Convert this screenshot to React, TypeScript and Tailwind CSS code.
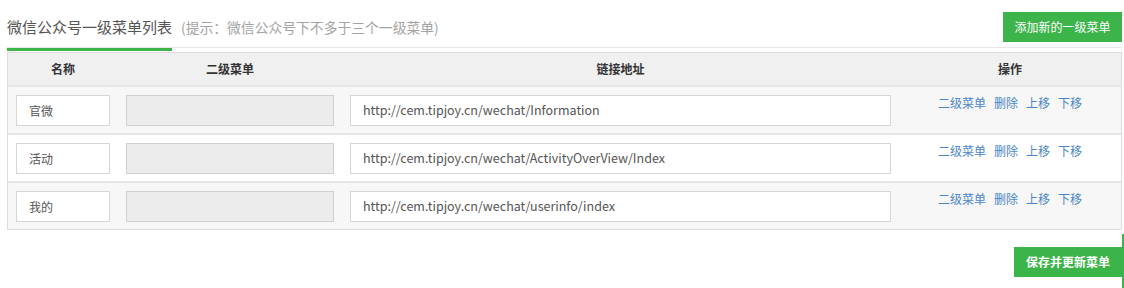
const rows = [
  { name: "官微", link: "http://cem.tipjoy.cn/wechat/Information", shade: true },
  { name: "活动", link: "http://cem.tipjoy.cn/wechat/ActivityOverView/Index", shade: false },
  { name: "我的", link: "http://cem.tipjoy.cn/wechat/userinfo/index", shade: true },
];

const cols = "grid grid-cols-[110px_224px_557px_1fr]";

function MenuRow({ name, link, shade }: { name: string; link: string; shade: boolean }) {
  return (
    <div
      className={`${cols} border-t-2 border-[#e6e6e6] pt-2 pb-[7px] ${
        shade ? "bg-[#f7f7f7]" : "bg-white"
      }`}
    >
      <div className="px-2">
        <div className="h-[31px] border border-[#d6d6d6] bg-white pl-3 flex items-center text-[12px] text-[#555]">
          {name}
        </div>
      </div>
      <div className="px-2">
        <div className="h-[31px] border border-[#d0d0d0] bg-[#ececec]" />
      </div>
      <div className="px-2">
        <div className="h-[31px] border border-[#d6d6d6] bg-white pl-3 flex items-center text-[12.5px] text-[#555]">
          {link}
        </div>
      </div>
      <div className="flex justify-center gap-2 text-[12px] leading-[16px] text-[#4a86c6]">
        <a>二级菜单</a>
        <a>删除</a>
        <a>上移</a>
        <a>下移</a>
      </div>
    </div>
  );
}

export default function App() {
  return (
    <div
      className="w-[1124px] h-[288px] overflow-hidden bg-white pl-[7px] pr-[2px] pt-3"
      style={{ fontFamily: '"Noto Sans CJK SC", "Noto Sans", sans-serif' }}
    >
      <div className="flex items-start justify-between border-b border-[#e6e6e6]">
        <div className="flex items-baseline gap-[9px] h-[35px] pt-[4px]">
          <span className="text-[15px] text-[#555] border-b-[3px] border-[#3cb44a] h-[35px] -mb-px">
            微信公众号一级菜单列表
          </span>
          <span className="text-[13.8px] text-[#a3a3a3]">(提示：微信公众号下不多于三个一级菜单)</span>
        </div>
        <button className="h-[30px] w-[119px] bg-[#3cb44a] text-white text-[12px]">
          添加新的一级菜单
        </button>
      </div>

      <div className="mt-[4px] border border-[#dcdcdc]">
        <div className={`${cols} h-[32px] items-center bg-[#f0f0f0] text-[12px] font-bold text-[#333] text-center`}>
          <div>名称</div>
          <div>二级菜单</div>
          <div>链接地址</div>
          <div>操作</div>
        </div>
        {rows.map((r) => (
          <MenuRow key={r.name} {...r} />
        ))}
      </div>

      <div className="flex justify-end items-start h-[60px]">
        <button className="mt-[17px] h-[30px] w-[108px] bg-[#3cb44a] text-white text-[12px] font-bold">
          保存并更新菜单
        </button>
        <div className="mt-[4px] w-[2px] h-[56px] bg-[#3cb44a] -mr-[2px]" />
      </div>
    </div>
  );
}
